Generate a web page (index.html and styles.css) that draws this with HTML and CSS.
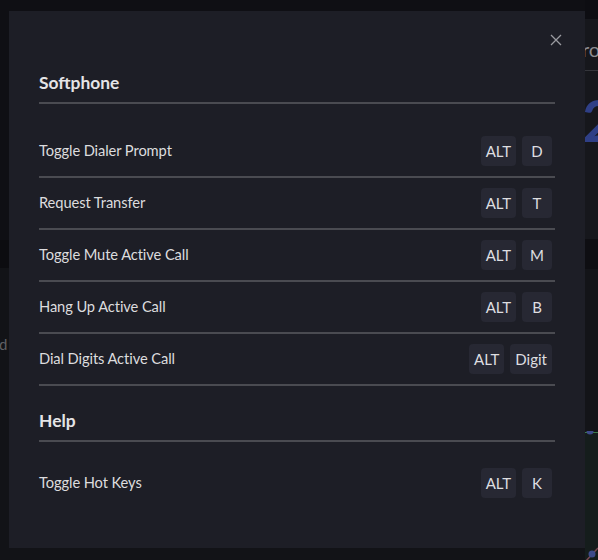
FILE: index.html
```html
<!DOCTYPE html>
<html lang="en">
<head>
<meta charset="utf-8">
<title>Hot Keys</title>
<link rel="stylesheet" href="styles.css">
</head>
<body>
<div class="page">
  <div class="col-left">
    <div class="left-top"></div>
    <div class="left-band"></div>
    <div class="left-body"><span class="left-label">d</span></div>
  </div>
  <div class="col-right">
    <div class="right-top"></div>
    <div class="card">
      <div class="card-head">ro</div>
      <div class="card-num">2</div>
    </div>
    <div class="right-band"></div>
    <div class="right-body"></div>
    <div class="chart">
      <svg class="chart-svg" width="13" height="130" viewBox="0 0 13 130">
        <circle cx="5" cy="0" r="3.5" fill="#3d4a8a"/>
        <line x1="0" y1="131" x2="13" y2="117" stroke="#7a4a55" stroke-width="1.5"/>
        <circle cx="7" cy="123" r="3.5" fill="#3d4a8a"/>
      </svg>
    </div>
  </div>
</div>

<div class="modal" role="dialog" aria-label="Hot Keys">
  <button class="close" aria-label="Close">
    <svg width="12" height="12" viewBox="0 0 12 12"><path d="M1 1L11 11M11 1L1 11" stroke="#9a9ba0" stroke-width="1.3" fill="none"/></svg>
  </button>

  <section class="section">
    <h2 class="section-title">Softphone</h2>
    <ul class="list list-first">
      <li class="row"><span class="label">Toggle Dialer Prompt</span><span class="keys"><kbd class="key">ALT</kbd><kbd class="key">D</kbd></span></li>
      <li class="row"><span class="label">Request Transfer</span><span class="keys"><kbd class="key">ALT</kbd><kbd class="key">T</kbd></span></li>
      <li class="row"><span class="label">Toggle Mute Active Call</span><span class="keys"><kbd class="key">ALT</kbd><kbd class="key">M</kbd></span></li>
      <li class="row"><span class="label">Hang Up Active Call</span><span class="keys"><kbd class="key">ALT</kbd><kbd class="key">B</kbd></span></li>
      <li class="row"><span class="label">Dial Digits Active Call</span><span class="keys"><kbd class="key">ALT</kbd><kbd class="key">Digit</kbd></span></li>
    </ul>
  </section>

  <section class="section section-help">
    <h2 class="section-title">Help</h2>
    <ul class="list list-help">
      <li class="row row-last"><span class="label">Toggle Hot Keys</span><span class="keys"><kbd class="key">ALT</kbd><kbd class="key">K</kbd></span></li>
    </ul>
  </section>
</div>
</body>
</html>
```

FILE: styles.css
```css
* { box-sizing: border-box; }
html, body { margin: 0; padding: 0; }
body {
  width: 598px;
  height: 560px;
  overflow: hidden;
  background: #111217;
  font-family: Lato, "Open Sans", "Liberation Sans", sans-serif;
}

/* dimmed page behind the dialog */
.page {
  display: grid;
  grid-template-columns: 585px 1fr;
  height: 560px;
}
.col-left, .col-right {
  display: flex;
  flex-direction: column;
}
.left-top { height: 240px; background: #0f0f14; }
.left-band { height: 28px; background: #0c0c10; }
.left-body { flex: 1; background: #121317; padding-top: 66px; }
.left-label { color: #5e5f64; font-size: 15px; margin-left: -1px; }

.right-top { height: 19px; background: #0d0d12; }
.card { height: 220px; background: #16171c; }
.card-head {
  height: 52px;
  border-bottom: 1px solid #34353b;
  color: #8a8b90;
  font-size: 20px;
  line-height: 60px;
  margin-left: -3px;
  white-space: nowrap;
}
.card-num {
  color: #2f3f86;
  font-size: 58px;
  font-weight: 700;
  line-height: 60px;
  margin-top: 19px;
  margin-left: -3px;
}
.right-band { height: 30px; background: #0e0e12; }
.right-body { height: 163px; background: #131418; }
.chart {
  flex: 1;
  background: #151d1c;
  border-top: 1.5px solid #3c7a4a;
}
.chart-svg { display: block; margin-top: -2px; }

/* dialog */
.modal {
  position: fixed;
  left: 9px;
  top: 11px;
  width: 576px;
  height: 537px;
  background: #1d1e26;
  padding: 59px 30px 40px;
}
.close {
  position: absolute;
  top: 22px;
  right: 22px;
  width: 14px;
  height: 14px;
  padding: 1px;
  border: 0;
  background: transparent;
  display: flex;
  align-items: center;
  justify-content: center;
}
.section-title {
  margin: 0;
  font-size: 17.4px;
  font-weight: 700;
  line-height: 25px;
  color: #e4e4e6;
  padding-bottom: 7px;
  border-bottom: 2px solid #4a4b51;
}
.section-help { margin-top: 22px; }
.list { list-style: none; margin: 0; padding: 0; }
.list-first { padding-top: 22px; }
.list-help { padding-top: 16px; }
.row {
  display: flex;
  align-items: center;
  justify-content: space-between;
  padding: 10px 3px 10px 0;
  border-bottom: 2px solid #4a4b51;
}
.row-last { border-bottom: 0; }
.label {
  font-size: 14.7px;
  letter-spacing: -0.1px;
  color: #dcdcde;
  position: relative;
  top: -1px;
}
.keys { display: flex; gap: 6px; }
.key {
  font-family: Lato, "Open Sans", "Liberation Sans", sans-serif;
  min-width: 30px;
  height: 30px;
  padding: 0 5px;
  border-radius: 4px;
  background: #272833;
  color: #dedee0;
  font-size: 15px;
  line-height: 30px;
  text-align: center;
}
```
